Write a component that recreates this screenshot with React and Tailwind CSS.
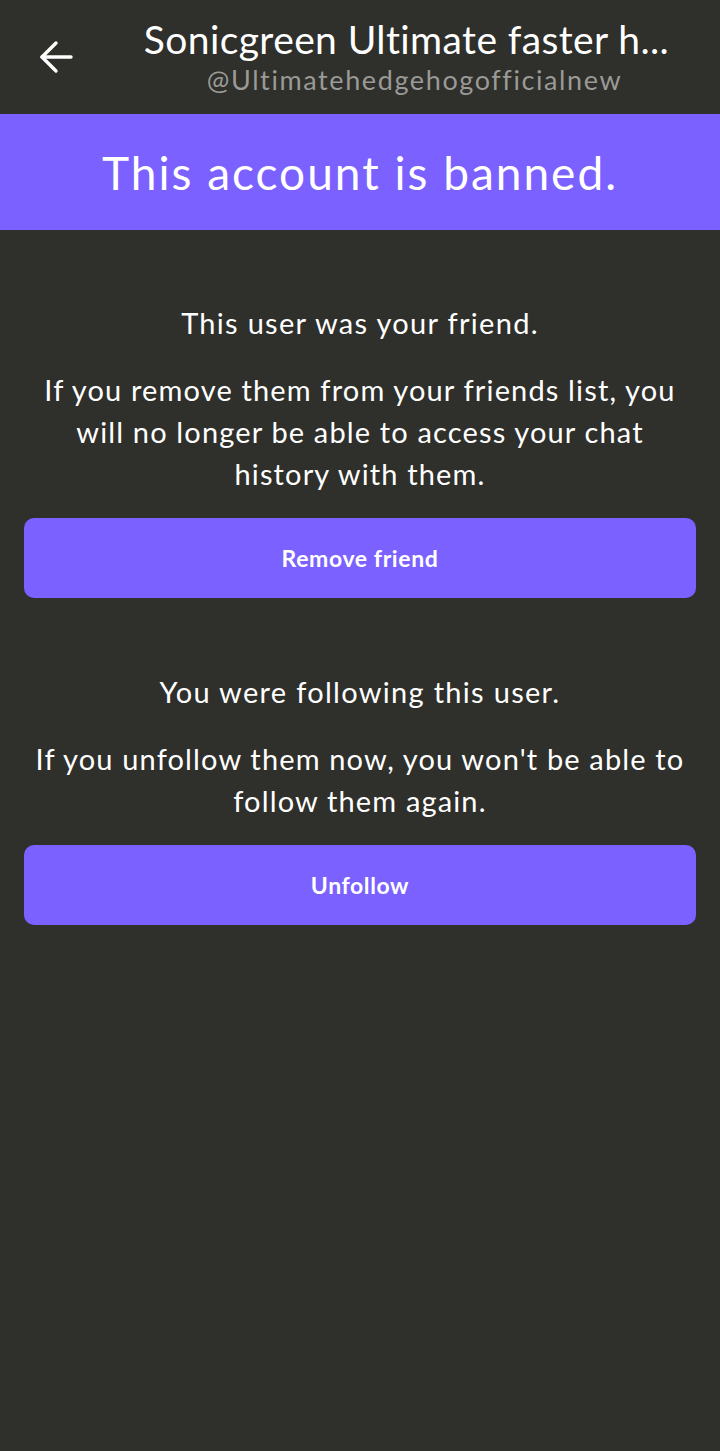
const font = { fontFamily: 'Lato, "Noto Sans", sans-serif' };

function BackArrow() {
  return (
    <svg viewBox="0 0 34 34" className="h-[34px] w-[34px]" fill="none" stroke="white" strokeWidth="3.4" strokeLinecap="round" strokeLinejoin="round">
      <path d="M32 17H3" />
      <path d="M17 3L3 17l14 14" />
    </svg>
  );
}

function Section({ title, body, action }) {
  return (
    <div className="flex flex-col">
      <p className="text-center text-[29px] leading-[42px] tracking-[1.3px] text-white">{title}</p>
      <p className="mt-[25px] px-[8px] text-center text-[29px] leading-[42px] tracking-[1.15px] text-white">{body}</p>
      <button className="mt-[23px] h-[80px] w-full rounded-[10px] bg-[#7b61ff] text-[23px] font-bold tracking-[0.6px] text-white">
        {action}
      </button>
    </div>
  );
}

export default function App() {
  return (
    <div className="min-h-[1451px] w-full bg-[#2f2f2b]" style={font}>
      {/* Header */}
      <div className="flex h-[114px] items-center">
        <div className="ml-[39px] flex h-[34px] w-[34px] items-center justify-center">
          <BackArrow />
        </div>
        <div className="flex min-w-0 flex-1 flex-col items-center pl-[20px]">
          <h1 className="whitespace-nowrap text-center text-[39px] leading-[42px] tracking-[0.4px] text-white">
            Sonicgreen Ultimate faster h...
          </h1>
          <p className="mt-[3px] ml-[16px] text-[27px] leading-[34px] tracking-[1.6px] text-[#9a9a96]">@Ultimatehedgehogofficialnew</p>
        </div>
      </div>

      {/* Banner */}
      <div className="flex h-[116px] items-center justify-center bg-[#7b61ff]">
        <p className="text-[46px] tracking-[2px] text-white">This account is banned.</p>
      </div>

      {/* Content */}
      <div className="flex flex-col gap-[73px] px-[24px] pt-[72px]">
        <Section
          title="This user was your friend."
          body="If you remove them from your friends list, you will no longer be able to access your chat history with them."
          action="Remove friend"
        />
        <Section
          title="You were following this user."
          body="If you unfollow them now, you won't be able to follow them again."
          action="Unfollow"
        />
      </div>
    </div>
  );
}
